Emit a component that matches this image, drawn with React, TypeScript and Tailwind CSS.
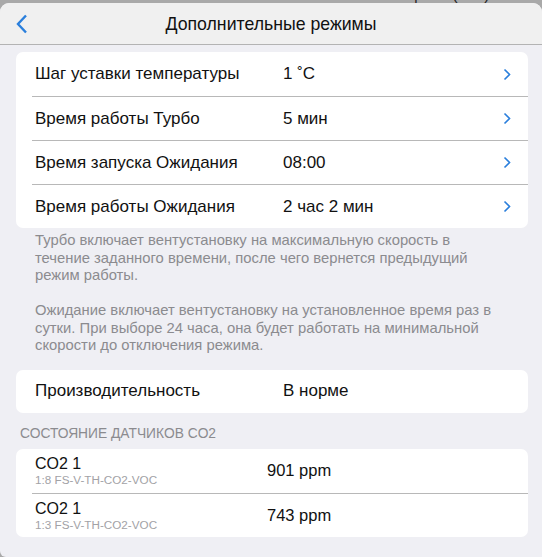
const font = { fontFamily: '"Liberation Sans", Arial, sans-serif' };

function Chevron() {
  return (
    <svg width="8" height="13" viewBox="0 0 8 13" className="shrink-0">
      <path d="M1.5 1.5 L6.5 6.5 L1.5 11.5" fill="none" stroke="#2a7fdc" strokeWidth="1.6" />
    </svg>
  );
}

type Row = { label: string; value: string };

const settings: Row[] = [
  { label: "Шаг уставки температуры", value: "1 ˚C" },
  { label: "Время работы Турбо", value: "5 мин" },
  { label: "Время запуска Ожидания", value: "08:00" },
  { label: "Время работы Ожидания", value: "2 час 2 мин" },
];

const sensors = [
  { name: "CO2 1", addr: "1:8 FS-V-TH-CO2-VOC", value: "901 ppm" },
  { name: "CO2 1", addr: "1:3 FS-V-TH-CO2-VOC", value: "743 ppm" },
];

export default function App() {
  return (
    <div className="w-[542px] h-[557px] overflow-hidden bg-[#a9a9a9] flex flex-col" style={font}>
      {/* screen behind the sheet */}
      <div className="h-[3px] shrink-0 overflow-hidden">
        <div className="-mt-[14px] ml-[345px] text-[16px] leading-[18px] text-[#222]">Вентиляция 1 (100)</div>
      </div>

      <div className="flex-1 flex flex-col rounded-t-[9px] rounded-bl-[6px] overflow-hidden bg-[#efeff4]">
        <header className="h-[42px] shrink-0 bg-[#f0f0f0] border-b border-[#b3b3b3] flex items-center relative">
          <svg width="12" height="20" viewBox="0 0 12 20" className="ml-[16px]">
            <path d="M10 1.5 L2 10 L10 18.5" fill="none" stroke="#2a7fdc" strokeWidth="2.4" />
          </svg>
          <div className="absolute inset-x-0 pt-[1px] text-center text-[17.7px] text-[#111] pointer-events-none">
            Дополнительные режимы
          </div>
        </header>

        <div className="pl-[16px] pr-[14px] pt-[7px] flex flex-col">
          <div className="bg-white rounded-[7px]">
            {settings.map((r, i) => (
              <div key={r.label} className="flex">
                <div className={`flex-1 h-[44px] ml-[16px] flex items-center ${i > 0 ? "border-t border-[#b8b8b8]" : ""}`}>
                  <span className="w-[251px] pl-[3px] text-[17px] text-[#111]">{r.label}</span>
                  <span className="flex-1 text-[17px] text-[#111]">{r.value}</span>
                  <span className="mr-[17px]"><Chevron /></span>
                </div>
              </div>
            ))}
          </div>

          <div className="mt-[4px] pl-[19px] pr-[29px] text-[14.8px] leading-[17.5px] text-[#8b8b8f]">
            <p>Турбо включает вентустановку на максимальную скорость в течение заданного времени, после чего вернется предыдущий режим работы.</p>
            <p className="mt-[17.5px]">Ожидание включает вентустановку на установленное время раз в сутки. При выборе 24 часа, она будет работать на минимальной скорости до отключения режима.</p>
          </div>

          <div className="mt-[15px] bg-white rounded-[7px] h-[43px] flex items-center pl-[19px]">
            <span className="w-[248px] text-[17px] text-[#111]">Производительность</span>
            <span className="text-[17px] text-[#111]">В норме</span>
          </div>

          <div className="mt-[13px] pl-[4px] text-[13.8px] leading-[16px] text-[#8b8b8f] uppercase">
            Состояние датчиков CO2
          </div>

          <div className="mt-[7px] bg-white rounded-[7px]">
            {sensors.map((s, i) => (
              <div key={s.addr} className="flex">
                <div className={`flex-1 h-[44px] ml-[16px] flex items-center ${i > 0 ? "border-t border-[#b8b8b8]" : ""}`}>
                  <div className="w-[235px] pl-[3px] flex flex-col">
                    <span className="text-[16px] leading-[17px] text-[#111]">{s.name}</span>
                    <span className="text-[11.7px] leading-[13px] text-[#a2a2a6] mt-[1px]">{s.addr}</span>
                  </div>
                  <span className="text-[16.5px] text-[#111]">{s.value}</span>
                </div>
              </div>
            ))}
          </div>
        </div>
      </div>
    </div>
  );
}
